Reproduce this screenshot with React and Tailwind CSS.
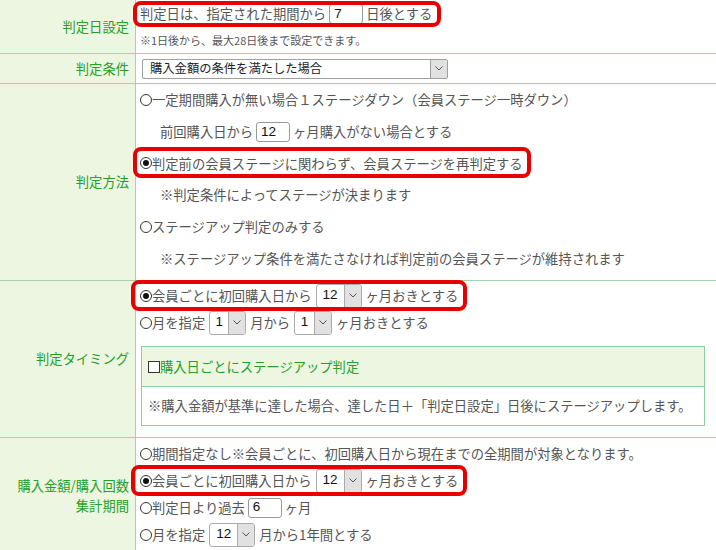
import React from "react";

const F = "font-['Noto_Sans_CJK_JP',sans-serif]";

function Chev() {
  return (
    <svg width="8" height="5" viewBox="0 0 8 5">
      <path d="M0.5 0.5 L4 4 L7.5 0.5" fill="none" stroke="#555" strokeWidth="1" />
    </svg>
  );
}

function Radio({ checked }) {
  return (
    <span className="relative inline-block w-[12px] h-[12px] rounded-full border border-[#333] bg-white shrink-0">
      {checked && (
        <span className="absolute left-[2px] top-[2px] w-[6px] h-[6px] rounded-full bg-[#111]" />
      )}
    </span>
  );
}

function Sel({ v, w }) {
  return (
    <span
      className={`inline-flex items-stretch h-[24px] rounded-[3px] border border-[#ababab] bg-white mx-[4px] shrink-0 ${w}`}
    >
      <span className="flex-1 flex items-center justify-center text-[#111] text-[13.5px] font-['Liberation_Sans',sans-serif]">
        {v}
      </span>
      <span className="w-[17px] bg-[#e1e1e1] border-l border-[#ababab] rounded-r-[2px] flex items-center justify-center">
        <Chev />
      </span>
    </span>
  );
}

function Inp({ v }) {
  return (
    <span className="inline-flex items-center h-[20px] w-[34px] px-[4px] mx-[3px] border border-[#999] rounded-[3px] bg-white text-[#111] text-[13.5px] font-['Liberation_Sans',sans-serif] shrink-0">
      {v}
    </span>
  );
}

function Red({ children, box }) {
  return (
    <span className="relative inline-flex items-center">
      {children}
      <span
        className={`absolute border-4 border-[#e80000] rounded-[8px] pointer-events-none ${box}`}
      />
    </span>
  );
}

function Label({ children }) {
  return (
    <div className="bg-[#edf6e0] border-r border-[#a3d5ad] flex items-center justify-end pr-[6px] text-[#22a02a] text-right">
      {children}
    </div>
  );
}

export default function App() {
  return (
    <div
      className={`w-[716px] h-[550px] overflow-hidden bg-white text-[13.3px] text-[#555] ${F}`}
    >
      {/* Row 1 */}
      <div className="grid grid-cols-[136px_1fr] h-[54px] border-b border-[#a3d5ad]">
        <Label>判定日設定</Label>
        <div className="pl-[4px] pt-[4px]">
          <div className="flex h-[20px] items-center">
            <Red box="left-[-7px] right-[-9px] top-[-3px] bottom-[-3px]">
              <span className="whitespace-nowrap">判定日は、指定された期間から</span>
              <Inp v="7" />
              <span className="whitespace-nowrap">日後とする</span>
            </Red>
          </div>
          <div className="mt-[6px] leading-[20px] text-[11px] whitespace-nowrap">
            ※1日後から、最大28日後まで設定できます。
          </div>
        </div>
      </div>

      {/* Row 2 */}
      <div className="grid grid-cols-[136px_1fr] h-[30px] border-b border-[#a3d5ad]">
        <Label>判定条件</Label>
        <div className="pl-[6px] flex items-center">
          <span className="flex items-center w-[306px] h-[20px] border border-[#a0a0a0] rounded-[2px] bg-white">
            <span className="flex-1 pl-[7px] text-[12.3px] text-[#222] whitespace-nowrap">
              購入金額の条件を満たした場合
            </span>
            <span className="w-[17px] h-full bg-[#e1e1e1] border-l border-[#a0a0a0] flex items-center justify-center">
              <Chev />
            </span>
          </span>
        </div>
      </div>

      {/* Row 3 */}
      <div className="grid grid-cols-[136px_1fr] h-[197px] border-b border-[#a3d5ad]">
        <Label>判定方法</Label>
        <div className="pl-[4px] whitespace-nowrap">
          <div className="h-[31.8px] flex items-center">
            <Radio />
            <span>一定期間購入が無い場合１ステージダウン（会員ステージ一時ダウン）</span>
          </div>
          <div className="h-[31.8px] flex items-center pl-[20px]">
            <span>前回購入日から</span>
            <Inp v="12" />
            <span>ヶ月購入がない場合とする</span>
          </div>
          <div className="h-[31.8px] flex items-center">
            <Red box="left-[-7px] right-[-8px] top-[-7px] bottom-[-5px]">
              <Radio checked />
              <span>判定前の会員ステージに関わらず、会員ステージを再判定する</span>
            </Red>
          </div>
          <div className="h-[31.8px] flex items-center pl-[20px]">
            ※判定条件によってステージが決まります
          </div>
          <div className="h-[31.8px] flex items-center">
            <Radio />
            <span>ステージアップ判定のみする</span>
          </div>
          <div className="h-[31.8px] flex items-center pl-[20px]">
            ※ステージアップ条件を満たさなければ判定前の会員ステージが維持されます
          </div>
        </div>
      </div>

      {/* Row 4 */}
      <div className="grid grid-cols-[136px_1fr] h-[157px] border-b border-[#a3d5ad]">
        <Label>判定タイミング</Label>
        <div className="pl-[4px] pr-[11px] pt-[1px] whitespace-nowrap">
          <div className="h-[27px] flex items-center">
            <Red box="left-[-9px] right-[-9px] top-[-4px] bottom-[-3px]">
              <Radio checked />
              <span>会員ごとに初回購入日から</span>
              <Sel v="12" w="w-[46px]" />
              <span>ヶ月おきとする</span>
            </Red>
          </div>
          <div className="h-[27px] flex items-center">
            <Radio />
            <span>月を指定</span>
            <Sel v="1" w="w-[37px]" />
            <span>月から</span>
            <Sel v="1" w="w-[38px]" />
            <span>ヶ月おきとする</span>
          </div>
          <div className="mt-[10px] ml-[1px] border border-[#8fcf9d]">
            <div className="h-[40px] bg-[#edf6e0] border-b border-[#8fcf9d] flex items-center pl-[6px]">
              <span className="inline-block w-[12px] h-[12px] border-[1.5px] border-[#333] bg-white shrink-0" />
              <span className="text-[#22a02a]">購入日ごとにステージアップ判定</span>
            </div>
            <div className="h-[38px] flex items-center pl-[6px]">
              ※購入金額が基準に達した場合、達した日＋「判定日設定」日後にステージアップします。
            </div>
          </div>
        </div>
      </div>

      {/* Row 5 */}
      <div className="grid grid-cols-[136px_1fr] h-[116px] border-b border-[#a3d5ad]">
        <Label>
          <div className="leading-[20px]">
            購入金額/購入回数
            <br />
            集計期間
          </div>
        </Label>
        <div className="pl-[4px] pt-[2px] whitespace-nowrap">
          <div className="h-[27px] flex items-center">
            <Radio />
            <span>期間指定なし※会員ごとに、初回購入日から現在までの全期間が対象となります。</span>
          </div>
          <div className="h-[27px] flex items-center">
            <Red box="left-[-9px] right-[-9px] top-[-4px] bottom-[-3px]">
              <Radio checked />
              <span>会員ごとに初回購入日から</span>
              <Sel v="12" w="w-[46px]" />
              <span>ヶ月おきとする</span>
            </Red>
          </div>
          <div className="h-[27px] flex items-center">
            <Radio />
            <span>判定日より過去</span>
            <Inp v="6" />
            <span>ヶ月</span>
          </div>
          <div className="h-[27px] flex items-center">
            <Radio />
            <span>月を指定</span>
            <Sel v="12" w="w-[46px]" />
            <span>月から1年間とする</span>
          </div>
        </div>
      </div>
    </div>
  );
}
